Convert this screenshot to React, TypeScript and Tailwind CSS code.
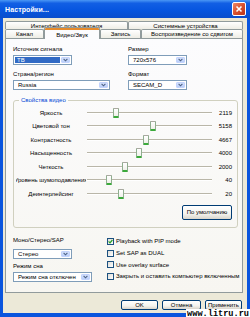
import React from "react";

function Chevron() {
  return (
    <svg width="5" height="4" viewBox="0 0 5 4" className="block">
      <path d="M0.6 0.8 L2.5 2.8 L4.4 0.8" fill="none" stroke="#4D6185" strokeWidth="1.1" />
    </svg>
  );
}

function Select({ w, value, focused }: { w: string; value: string; focused?: boolean }) {
  return (
    <div className={`${w} h-[10px] border border-[#7F9DB9] bg-white flex items-stretch`}>
      <div className="flex-1 flex items-center p-[1px] min-w-0">
        {focused ? (
          <div className="w-full h-full bg-[#316AC5] text-white flex items-center pl-[2px]">{value}</div>
        ) : (
          <div className="pl-[3px]">{value}</div>
        )}
      </div>
      <div className="w-[9px] m-[1px] ml-0 rounded-[1px] bg-[linear-gradient(180deg,#D6E3FD_0%,#B9CEF9_100%)] border border-[#C3D3FD] flex items-center justify-center">
        <Chevron />
      </div>
    </div>
  );
}

function Checkbox({ checked, label }: { checked?: boolean; label: string }) {
  return (
    <div className="h-[11.7px] flex items-center">
      <div className="w-[7px] h-[7px] border border-[#1C5180] bg-[linear-gradient(135deg,#DCDCD7_0%,#FFFFFF_100%)] flex items-center justify-center">
        {checked && (
          <svg width="5" height="5" viewBox="0 0 5 5" className="block">
            <path d="M0.6 2.4 L2 3.8 L4.4 1" fill="none" stroke="#21A121" strokeWidth="1.2" />
          </svg>
        )}
      </div>
      <span className="ml-[2px] whitespace-nowrap">{label}</span>
    </div>
  );
}

function Slider({ label, value, thumb }: { label: string; value: string; thumb: string }) {
  return (
    <div className="h-[13.5px] flex items-center">
      <div className="ml-[2px] w-[70px] flex justify-center overflow-hidden">
        <span className="whitespace-nowrap shrink-0">{label}</span>
      </div>
      <div className="ml-[1px] w-[125px] h-full relative flex items-center">
        <div className="w-full h-[2px] border-t border-[#B9B6A8] border-b border-b-white" />
        <div
          className={`absolute ${thumb} top-[1.5px] w-[6px] h-[10px] rounded-[1px] bg-[linear-gradient(180deg,#FFFFFF_0%,#F0F0EA_100%)] border border-[#8FAE8F] border-t-[#A9A9A0] border-b-2 border-b-[#3BAA3B]`}
        />
      </div>
      <div className="w-[20px] text-right">{value}</div>
    </div>
  );
}

function XPButton({ w, h, label }: { w: string; h: string; label: string }) {
  return (
    <div
      className={`${w} ${h} rounded-[2px] border border-[#003C74] bg-[linear-gradient(180deg,#FFFFFF_0%,#F4F3EE_60%,#D9D5CB_100%)] flex items-center justify-center`}
    >
      {label}
    </div>
  );
}

function Tab({ w, label }: { w: string; label: string }) {
  return (
    <div
      className={`${w} h-full border border-b-0 border-[#919B9C] rounded-t-[2px] bg-[linear-gradient(180deg,#FFFFFF_0%,#EEEDE5_100%)] flex items-center justify-center whitespace-nowrap`}
    >
      {label}
    </div>
  );
}

export default function App() {
  return (
    <div className="w-[250px] h-[317px] relative overflow-hidden bg-[#0A55DE] flex flex-col font-['Liberation_Sans',Arial,sans-serif] text-[6px] leading-none text-black">
      {/* title bar */}
      <div className="h-[18px] shrink-0 flex items-center justify-between pl-[5px] pr-[4px] bg-[linear-gradient(180deg,#4A97F5_0%,#125FE4_18%,#0756E0_55%,#0A4ECC_100%)]">
        <span className="text-white font-bold text-[7px] tracking-[0.1px]">Настройки...</span>
        <div className="w-[14px] h-[14px] rounded-[2px] border border-white bg-[linear-gradient(135deg,#EE8A6A_0%,#D9512E_50%,#B8341A_100%)] flex items-center justify-center">
          <svg width="8" height="8" viewBox="0 0 8 8" className="block">
            <path d="M1.5 1.5 L6.5 6.5 M6.5 1.5 L1.5 6.5" stroke="white" strokeWidth="1.6" />
          </svg>
        </div>
      </div>

      {/* body */}
      <div className="flex-1 mx-[3px] mb-[4px] bg-[#ECE9D8] flex flex-col px-[2px] pt-[3px]">
        {/* tabs */}
        <div className="flex flex-col">
          <div className="h-[8px] flex">
            <Tab w="w-[123px]" label="Интерфейс пользователя" />
            <Tab w="w-[115px]" label="Системные устройства" />
          </div>
          <div className="h-[9px] flex items-end">
            <Tab w="w-[39px]" label="Канал" />
            <div className="w-[56px] h-[12px] relative top-[1px] z-10 border border-b-0 border-[#919B9C] rounded-t-[2px] bg-[#FCFCFE] flex flex-col">
              <div className="h-[2px] bg-[#E68B2C] rounded-t-[1px]" />
              <div className="flex-1 flex items-center justify-center">Видео/Звук</div>
            </div>
            <Tab w="w-[41px]" label="Запись" />
            <Tab w="w-[102px]" label="Воспроизведение со сдвигом" />
          </div>
        </div>

        {/* panel */}
        <div className="w-[238px] h-[255px] border border-[#919B9C] bg-[linear-gradient(180deg,#FCFCFE_0%,#F7F6F1_100%)] flex flex-col pl-[7px] pr-[5px] pt-[6px]">
          <div className="grid grid-cols-[115px_1fr]">
            <div className="flex flex-col">
              <div className="h-[8px] flex items-center">Источник сигнала</div>
              <div className="mt-[2px]">
                <Select w="w-[59px]" value="ТВ" focused />
              </div>
              <div className="h-[8px] mt-[5px] flex items-center">Страна/регион</div>
              <div className="mt-[2px]">
                <Select w="w-[97px]" value="Russia" />
              </div>
            </div>
            <div className="flex flex-col">
              <div className="h-[8px] flex items-center">Размер</div>
              <div className="mt-[2px]">
                <Select w="w-[59px]" value="720x576" />
              </div>
              <div className="h-[8px] mt-[5px] flex items-center">Формат</div>
              <div className="mt-[2px]">
                <Select w="w-[59px]" value="SECAM_D" />
              </div>
            </div>
          </div>

          <fieldset className="mt-[6px] border border-[#D0D0BF] rounded-[3px] pt-[2px] pb-[7px] pr-[5px]">
            <legend className="ml-[5px] px-[2px] h-[8px] leading-[8px] text-[#0046D5]">Свойства видео</legend>
            <Slider label="Яркость" value="2119" thumb="left-[26px]" />
            <Slider label="Цветовой тон" value="5158" thumb="left-[63px]" />
            <Slider label="Контрастность" value="4667" thumb="left-[56px]" />
            <Slider label="Насыщенность" value="4000" thumb="left-[49px]" />
            <Slider label="Четкость" value="2000" thumb="left-[35px]" />
            <Slider label="Уровень шумоподавления" value="40" thumb="left-[19px]" />
            <Slider label="Деинтерлейсинг" value="20" thumb="left-[31px]" />
            <div className="mt-[4px] flex justify-end">
              <XPButton w="w-[50px]" h="h-[15px]" label="По умолчанию" />
            </div>
          </fieldset>

          <div className="mt-[8px] grid grid-cols-[94px_1fr]">
            <div className="flex flex-col">
              <div className="h-[9px] flex items-center">Моно/Стерео/SAP</div>
              <div className="mt-[4px]">
                <Select w="w-[59px]" value="Стерео" />
              </div>
              <div className="h-[9px] mt-[3px] flex items-center">Режим сна</div>
              <div className="mt-[1px]">
                <Select w="w-[79px]" value="Режим сна отключен" />
              </div>
            </div>
            <div className="flex flex-col">
              <Checkbox checked label="Playback with PIP mode" />
              <Checkbox label="Set SAP as DUAL" />
              <Checkbox label="Use overlay surface" />
              <Checkbox label="Закрыть и оставить компьютер включенным" />
            </div>
          </div>
        </div>

        {/* buttons */}
        <div className="mt-[7px] flex justify-end gap-[4px] pr-[3px]">
          <XPButton w="w-[37px]" h="h-[10px]" label="OK" />
          <XPButton w="w-[39px]" h="h-[10px]" label="Отмена" />
          <XPButton w="w-[37px]" h="h-[10px]" label="Применить" />
        </div>
      </div>

      <span className="absolute right-0 bottom-[-2px] bg-white px-[1px] font-['Liberation_Mono',monospace] font-bold text-[8.6px] leading-[10px] text-black">
        www.litru.ru
      </span>
    </div>
  );
}
